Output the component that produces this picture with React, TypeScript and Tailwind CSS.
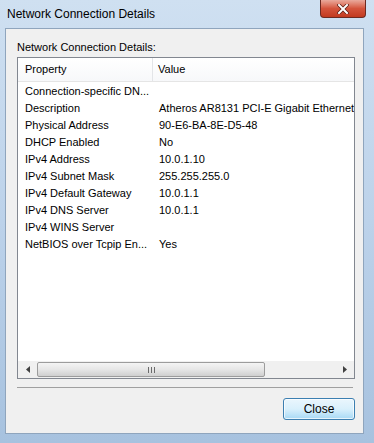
const rows: [string, string][] = [
  ['Connection-specific DN...', ''],
  ['Description', 'Atheros AR8131 PCI-E Gigabit Ethernet Controller (NDIS 6.20)'],
  ['Physical Address', '90-E6-BA-8E-D5-48'],
  ['DHCP Enabled', 'No'],
  ['IPv4 Address', '10.0.1.10'],
  ['IPv4 Subnet Mask', '255.255.255.0'],
  ['IPv4 Default Gateway', '10.0.1.1'],
  ['IPv4 DNS Server', '10.0.1.1'],
  ['IPv4 WINS Server', ''],
  ['NetBIOS over Tcpip En...', 'Yes'],
];

export default function App() {
  return (
    <div
      className="relative flex h-[443px] w-[374px] flex-col overflow-hidden bg-gradient-to-b from-[#cfe0f1] via-[#bcd2ea] to-[#a7c2df] text-[11px] text-black"
      style={{ fontFamily: '"Liberation Sans", Arial, sans-serif' }}
    >
      {/* title bar */}
      <div className="flex h-[28px] items-center pl-[7px] text-[12px]">Network Connection Details</div>
      <div className="absolute right-[8px] top-0 flex h-[18px] w-[46px] items-center justify-center rounded-b-[4px] border border-t-0 border-[#6d2a21] bg-gradient-to-b from-[#e9a99c] via-[#d4543c] to-[#c23a1f]">
        <svg width="12" height="10" viewBox="0 0 12 10">
          <path d="M2 1 L10 9 M10 1 L2 9" stroke="#5a1c12" strokeWidth="3.4" strokeLinecap="square" />
          <path d="M2 1 L10 9 M10 1 L2 9" stroke="#ffffff" strokeWidth="2" strokeLinecap="square" />
        </svg>
      </div>

      {/* client area */}
      <div className="mb-[9px] ml-[5px] mr-[10px] flex flex-1 flex-col border border-[#8fa5bd] bg-[#f0f0f0] pl-[11px] pr-[8px]">
        <div className="pt-[11px] leading-[14px]">Network Connection Details:</div>
        <div className="mt-[3px] flex h-[322px] flex-col overflow-hidden border border-[#828790] bg-white">
          {/* header */}
          <div className="flex h-[24px] shrink-0 border-b border-[#e5e5e5] bg-gradient-to-b from-white to-[#f7f8fa]">
            <div className="flex w-[135px] items-center border-r border-[#e3e5e8] pl-[7px]">Property</div>
            <div className="flex flex-1 items-center pl-[5px]">Value</div>
          </div>
          {/* rows */}
          <div className="flex-1 pt-[1px]">
            {rows.map(([k, v]) => (
              <div key={k} className="flex h-[17px] items-center whitespace-nowrap">
                <div className="w-[140px] shrink-0 pl-[7px]">{k}</div>
                <div className="pl-[1px]">{v}</div>
              </div>
            ))}
          </div>
          {/* horizontal scrollbar */}
          <div className="flex h-[17px] shrink-0 items-center bg-[#f0f0f0]">
            <div className="flex w-[19px] justify-center">
              <svg width="4" height="7" viewBox="0 0 4 7">
                <path d="M4 0 L0 3.5 L4 7 Z" fill="#404040" />
              </svg>
            </div>
            <div className="flex h-[15px] w-[228px] items-center justify-center rounded-[2px] border border-[#9c9c9c] bg-gradient-to-b from-[#f4f4f4] via-[#e6e6e6] to-[#cfcfcf]">
              <div className="flex gap-[2px]">
                <div className="h-[6px] w-px bg-[#6a6a6a]" />
                <div className="h-[6px] w-px bg-[#6a6a6a]" />
                <div className="h-[6px] w-px bg-[#6a6a6a]" />
              </div>
            </div>
            <div className="flex-1" />
            <div className="flex w-[19px] justify-center">
              <svg width="4" height="7" viewBox="0 0 4 7">
                <path d="M0 0 L4 3.5 L0 7 Z" fill="#404040" />
              </svg>
            </div>
          </div>
        </div>
        {/* separator */}
        <div className="mr-[2px] mt-[8px] border-t border-[#a0a0a0]" />
        {/* footer */}
        <div className="flex justify-end pt-[10px]">
          <button className="flex h-[22px] w-[72px] items-center justify-center rounded-[3px] border border-[#3c7fb1] bg-gradient-to-b from-[#eaf6fd] via-[#d9f0fc] to-[#a7d9f5] text-[12px] shadow-[inset_0_0_0_1px_rgba(255,255,255,0.7)]">
            Close
          </button>
        </div>
      </div>
    </div>
  );
}
